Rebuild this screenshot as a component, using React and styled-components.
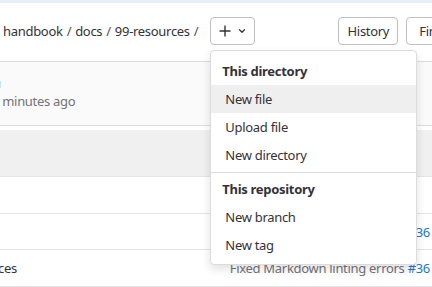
import React from "react";
import styled, { createGlobalStyle } from "styled-components";

const GlobalStyle = createGlobalStyle`
  html, body {
    margin: 0;
    padding: 0;
    background: #fff;
    overflow: hidden;
  }
  body {
    font-family: "Noto Sans", "Open Sans", sans-serif;
    font-size: 13px;
    letter-spacing: -0.3px;
    color: #333238;
  }
`;

const Page = styled.div`
  width: 432px;
  height: 287px;
  overflow: hidden;
  display: flex;
  flex-direction: column;
`;

const TopStrip = styled.div`
  height: 3px;
  flex-shrink: 0;
  background: #e9eff8;
`;

const Toolbar = styled.div`
  display: flex;
  align-items: center;
  padding: 14px 0 16px 3px;
  flex-shrink: 0;
`;

const Breadcrumbs = styled.nav`
  display: flex;
  align-items: center;
  white-space: nowrap;
  flex-shrink: 0;
`;

const Crumb = styled.span`
  color: #333238;
`;

const Sep = styled.span`
  margin: 0 4px;
  color: #535158;
`;

const AddWrap = styled.div`
  position: relative;
  margin-left: 8px;
  flex-shrink: 0;
`;

const Button = styled.button`
  box-sizing: border-box;
  height: 28px;
  display: flex;
  align-items: center;
  justify-content: center;
  gap: 7px;
  padding: 0 ${(p) => (p.$icon ? "0" : "12px")};
  width: ${(p) => (p.$w ? `${p.$w}px` : "auto")};
  border: 1px solid #bfbfc3;
  border-radius: 4px;
  background: #fff;
  color: #333238;
  font-family: inherit;
  font-size: 13px;
  letter-spacing: -0.3px;
  white-space: nowrap;
  flex-shrink: 0;
`;

const Actions = styled.div`
  display: flex;
  gap: 8px;
  margin-left: 83px;
  flex-shrink: 0;
`;

const Menu = styled.div`
  position: absolute;
  top: 33px;
  left: 0;
  width: 207px;
  box-sizing: border-box;
  padding: 4px 0 5px;
  background: #fff;
  border: 1px solid #dcdcde;
  border-radius: 4px;
  box-shadow: 0 4px 10px rgba(0, 0, 0, 0.12);
  z-index: 10;
`;

const GroupLabel = styled.div`
  padding: ${(p) => (p.$first ? "7px" : "4px")} 11px 4px;
  line-height: 19px;
  font-weight: 700;
  color: #333238;
`;

const Item = styled.div`
  height: 28px;
  line-height: 28px;
  padding: 0 14px;
  background: ${(p) => (p.$active ? "#efefef" : "transparent")};
  color: #333238;
`;

const Divider = styled.div`
  height: 1px;
  margin: 3px 0;
  background: #dcdcde;
`;

const Table = styled.div`
  border-top: 1px solid #dcdcde;
  display: flex;
  flex-direction: column;
`;

const CommitRow = styled.div`
  height: 64px;
  box-sizing: border-box;
  padding-top: 12px;
  background: #fafafa;
  border-bottom: 1px solid #dcdcde;
  line-height: 18px;
  overflow: hidden;
  white-space: nowrap;
`;

const CommitLine = styled.div`
  color: ${(p) => (p.$muted ? "#737278" : "#333238")};
  margin-left: ${(p) => p.$shift || 0}px;
`;

const HeadRow = styled.div`
  height: 46px;
  margin-top: 4px;
  background: #f0f0f0;
  border-bottom: 1px solid #e4e4e6;
`;

const FileRow = styled.div`
  height: ${(p) => p.$h}px;
  display: flex;
  align-items: center;
  border-bottom: 1px solid #e4e4e6;
  white-space: nowrap;
  overflow: hidden;
  flex-shrink: 0;
`;

const FileName = styled.span`
  margin-left: ${(p) => p.$shift || 0}px;
  color: #333238;
`;

const CommitMsg = styled.span`
  margin-left: auto;
  padding-right: 2px;
  color: #737278;
`;

const Link = styled.span`
  color: #1f75cb;
`;

const PlusIcon = () => (
  <svg width="12" height="12" viewBox="0 0 12 12" fill="none">
    <path d="M6 0.5v11M0.5 6h11" stroke="#333238" strokeWidth="1.4" />
  </svg>
);

const ChevronIcon = () => (
  <svg width="8" height="6" viewBox="0 0 8 6" fill="none">
    <path d="M1.5 1.8L4 4.2l2.5-2.4" stroke="#333238" strokeWidth="1.3" strokeLinecap="round" strokeLinejoin="round" />
  </svg>
);

export default function App() {
  return (
    <>
      <GlobalStyle />
      <Page>
        <TopStrip />
        <Toolbar>
          <Breadcrumbs>
            <Crumb>handbook</Crumb>
            <Sep>/</Sep>
            <Crumb>docs</Crumb>
            <Sep>/</Sep>
            <Crumb>99-resources</Crumb>
            <Sep>/</Sep>
          </Breadcrumbs>
          <AddWrap>
            <Button $icon $w={45}>
              <PlusIcon />
              <ChevronIcon />
            </Button>
            <Menu>
              <GroupLabel $first>This directory</GroupLabel>
              <Item $active>New file</Item>
              <Item>Upload file</Item>
              <Item>New directory</Item>
              <Divider />
              <GroupLabel>This repository</GroupLabel>
              <Item>New branch</Item>
              <Item>New tag</Item>
            </Menu>
          </AddWrap>
          <Actions>
            <Button $w={60}>History</Button>
            <Button>Find file</Button>
          </Actions>
        </Toolbar>
        <Table>
          <CommitRow>
            <CommitLine $shift={-7}>u</CommitLine>
            <CommitLine $muted $shift={-8}>5 minutes ago</CommitLine>
          </CommitRow>
          <HeadRow />
          <FileRow $h={36} />
          <FileRow $h={35}>
            <CommitMsg>
              Fixed Markdown linting errors <Link>#36</Link>
            </CommitMsg>
          </FileRow>
          <FileRow $h={36}>
            <FileName $shift={-58}>99-resources</FileName>
            <CommitMsg>
              Fixed Markdown linting errors <Link>#36</Link>
            </CommitMsg>
          </FileRow>
        </Table>
      </Page>
    </>
  );
}
